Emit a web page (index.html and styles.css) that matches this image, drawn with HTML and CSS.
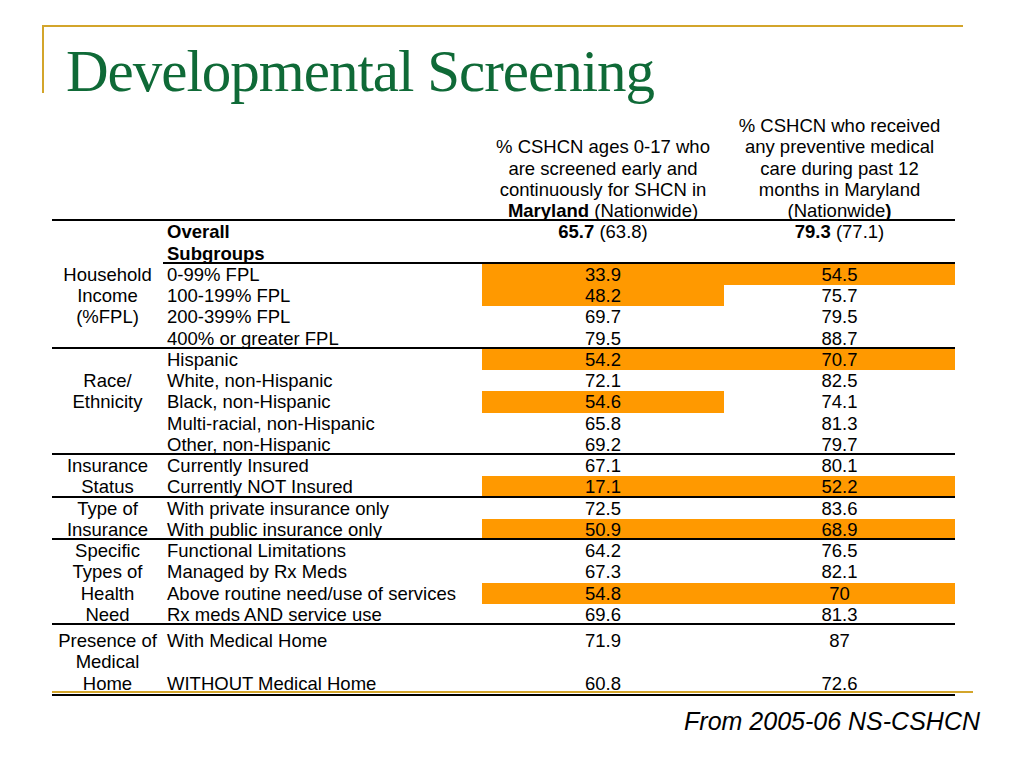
FILE: index.html
```html
<!DOCTYPE html>
<html>
<head>
<meta charset="utf-8">
<link rel="stylesheet" href="styles.css">
</head>
<body>
<div class="slide-head">
  <h1 class="title">Developmental Screening</h1>
</div>
<div class="table-wrap">
  <table class="data">
    <colgroup>
      <col class="c-cat"><col class="c-sub"><col class="c-v1"><col class="c-v2">
    </colgroup>
    <thead>
      <tr>
        <th></th>
        <th></th>
        <th class="hv">% CSHCN ages 0-17 who<br>are screened early and<br>continuously for SHCN in<br><b>Maryland</b> (Nationwide)</th>
        <th class="hv">% CSHCN who received<br>any preventive medical<br>care during past 12<br>months in Maryland<br>(Nationwide<b>)</b></th>
      </tr>
    </thead>
    <tbody class="overall">
      <tr>
        <td></td>
        <td class="sub top"><b>Overall<br>Subgroups</b></td>
        <td class="val top"><b>65.7</b> (63.8)</td>
        <td class="val top"><b>79.3</b> (77.1)</td>
      </tr>
    </tbody>
    <tbody class="grp">
      <tr><td class="cat" rowspan="4">Household<br>Income<br>(%FPL)</td><td class="sub">0-99% FPL</td><td class="val hl">33.9</td><td class="val hl">54.5</td></tr>
      <tr><td class="sub">100-199% FPL</td><td class="val hl">48.2</td><td class="val">75.7</td></tr>
      <tr><td class="sub">200-399% FPL</td><td class="val">69.7</td><td class="val">79.5</td></tr>
      <tr><td class="sub">400% or greater FPL</td><td class="val">79.5</td><td class="val">88.7</td></tr>
    </tbody>
    <tbody class="grp">
      <tr><td class="cat cat-drop" rowspan="5">Race/<br>Ethnicity</td><td class="sub">Hispanic</td><td class="val hl">54.2</td><td class="val hl">70.7</td></tr>
      <tr><td class="sub">White, non-Hispanic</td><td class="val">72.1</td><td class="val">82.5</td></tr>
      <tr><td class="sub">Black, non-Hispanic</td><td class="val hl">54.6</td><td class="val">74.1</td></tr>
      <tr><td class="sub">Multi-racial, non-Hispanic</td><td class="val">65.8</td><td class="val">81.3</td></tr>
      <tr><td class="sub">Other, non-Hispanic</td><td class="val">69.2</td><td class="val">79.7</td></tr>
    </tbody>
    <tbody class="grp">
      <tr><td class="cat" rowspan="2">Insurance<br>Status</td><td class="sub">Currently Insured</td><td class="val">67.1</td><td class="val">80.1</td></tr>
      <tr><td class="sub">Currently NOT Insured</td><td class="val hl">17.1</td><td class="val hl">52.2</td></tr>
    </tbody>
    <tbody class="grp">
      <tr><td class="cat" rowspan="2">Type of<br>Insurance</td><td class="sub">With private insurance only</td><td class="val">72.5</td><td class="val">83.6</td></tr>
      <tr><td class="sub">With public insurance only</td><td class="val hl">50.9</td><td class="val hl">68.9</td></tr>
    </tbody>
    <tbody class="grp">
      <tr><td class="cat" rowspan="4">Specific<br>Types of<br>Health<br>Need</td><td class="sub">Functional Limitations</td><td class="val">64.2</td><td class="val">76.5</td></tr>
      <tr><td class="sub">Managed by Rx Meds</td><td class="val">67.3</td><td class="val">82.1</td></tr>
      <tr><td class="sub">Above routine need/use of services</td><td class="val hl">54.8</td><td class="val hl">70</td></tr>
      <tr><td class="sub">Rx meds AND service use</td><td class="val">69.6</td><td class="val">81.3</td></tr>
    </tbody>
    <tbody class="grp last">
      <tr class="tall"><td class="cat pad" rowspan="2">Presence of<br>Medical<br>Home</td><td class="sub top pad">With Medical Home</td><td class="val top pad">71.9</td><td class="val top pad">87</td></tr>
      <tr><td class="sub">WITHOUT Medical Home</td><td class="val">60.8</td><td class="val">72.6</td></tr>
    </tbody>
  </table>
  <div class="gold-rule"></div>
</div>
<p class="source">From 2005-06 NS-CSHCN</p>
</body>
</html>
```
FILE: styles.css
```css
html, body {
  margin: 0;
  padding: 0;
  background: #ffffff;
}

body {
  font-family: "Liberation Sans", Arial, sans-serif;
  color: #000000;
  width: 1024px;
  height: 768px;
  overflow: hidden;
}

.slide-head {
  margin: 25px 0 0 42px;
  width: 897px;
  height: 66px;
  border-top: 2px solid #d3a52b;
  border-left: 2px solid #d3a52b;
  padding-left: 22px;
}

.title {
  margin: 0;
  padding-top: 15px;
  font-family: "Liberation Serif", "Times New Roman", serif;
  font-weight: normal;
  font-size: 59px;
  line-height: 59px;
  letter-spacing: -1px;
  color: #0f6a37;
  white-space: nowrap;
}

.table-wrap {
  position: relative;
  margin: 22px 0 0 52px;
  width: 903px;
}

.data {
  width: 903px;
  border-collapse: separate;
  border-spacing: 0;
  table-layout: fixed;
  font-size: 18.5px;
  line-height: 21.25px;
  border-bottom: 2px solid #000;
}

.c-cat { width: 111px; }
.c-sub { width: 319px; }
.c-v1 { width: 242px; }
.c-v2 { width: 231px; }

.data th,
.data td {
  padding: 0;
  font-weight: normal;
  white-space: nowrap;
}

.data thead th {
  vertical-align: bottom;
  text-align: center;
  box-shadow: inset 0 -2px 0 #000;
}

.data b {
  font-weight: bold;
}

.overall td:not(:first-child) {
  box-shadow: inset 0 -2px 0 #000;
}

.overall td {
  height: 42.5px;
}

.grp:not(.last) tr:last-child td,
.grp:not(.last) td.cat {
  box-shadow: inset 0 -2px 0 #000;
}

.cat {
  text-align: center;
  vertical-align: top;
}

.cat-drop {
  padding-top: 21.25px !important;
}

.sub {
  text-align: left;
  padding-left: 4px !important;
}

.val {
  text-align: center;
}

.top {
  vertical-align: top;
}

.hl {
  background: #ff9900;
}

.data td.pad {
  padding-top: 5px;
}

.tall .sub,
.tall .val {
  height: 42.5px;
}

.gold-rule {
  position: absolute;
  left: 0;
  bottom: 3px;
  width: 921px;
  height: 2px;
  background: #d3a52b;
}

.source {
  margin: 10px 44px 0 0;
  text-align: right;
  font-style: italic;
  font-size: 25px;
  line-height: 30px;
}
```
